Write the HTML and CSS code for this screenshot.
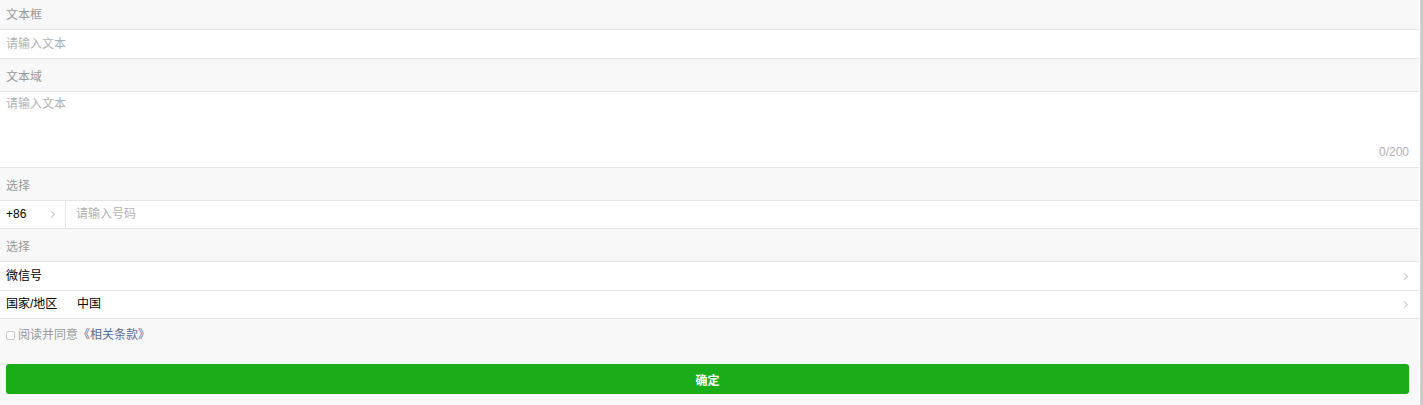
FILE: index.html
```html
<!DOCTYPE html>
<html lang="zh-CN">
<head>
<meta charset="utf-8">
<title>表单</title>
<link rel="stylesheet" href="styles.css">
</head>
<body>
<div class="page">
  <main class="form">
    <div class="title first">文本框</div>
    <div class="cells">
      <div class="cell"><input class="input" type="text" placeholder="请输入文本"></div>
    </div>

    <div class="title">文本域</div>
    <div class="cells">
      <div class="cell area">
        <textarea class="textarea" placeholder="请输入文本"></textarea>
        <div class="counter">0/200</div>
      </div>
    </div>

    <div class="title">选择</div>
    <div class="cells">
      <div class="cell phone">
        <div class="code">+86<span class="arrow"></span></div>
        <input class="input num" type="text" placeholder="请输入号码">
      </div>
    </div>

    <div class="title">选择</div>
    <div class="cells">
      <div class="cell link"><span class="label">微信号</span><span class="grow"></span><span class="arrow"></span></div>
      <div class="cell link sep"><span class="label wide">国家/地区</span><span class="value">中国</span><span class="grow"></span><span class="arrow"></span></div>
    </div>

    <label class="agree"><span class="box"></span>阅读并同意<a class="terms" href="#">《相关条款》</a></label>

    <div class="btn-area"><button class="btn">确定</button></div>
  </main>
  <div class="gutter"></div>
  <div class="bar"></div>
</div>
</body>
</html>
```

FILE: styles.css
```css
* { box-sizing: border-box; }
html, body { margin: 0; padding: 0; }
body {
  font-family: "Liberation Sans", "Noto Sans CJK SC", sans-serif;
  font-size: 12px;
  color: #000;
  background: #f8f8f8;
}
.page { display: flex; height: 405px; overflow: hidden; }
.form { width: 1419px; background: #f8f8f8; }
.gutter { width: 1px; background: #fff; }
.bar { width: 3px; background: #cdcdcd; }

.title {
  color: #999;
  line-height: 17px;
  padding: 10px 6px 5px;
}
.title.first { padding-top: 7px; }

.cells {
  background: #fff;
  border-top: 1px solid #e5e5e5;
  border-bottom: 1px solid #e5e5e5;
}
.cell {
  display: flex;
  align-items: center;
  height: 28px;
  line-height: 17px;
  padding: 0 10px 0 6px;
}
.cell.sep { border-top: 1px solid #e5e5e5; height: 28px; }

.input {
  border: 0;
  outline: 0;
  background: transparent;
  font: inherit;
  font-size: 12px;
  line-height: 17px;
  padding: 0;
  margin: 0;
  width: 100%;
  min-width: 0;
  color: #000;
}
.input::placeholder, .textarea::placeholder { color: #b2b2b2; }

.area {
  display: block;
  height: 75px;
  padding: 4px 10px 6px 6px;
}
.textarea {
  display: block;
  width: 100%;
  height: 48px;
  border: 0;
  outline: 0;
  resize: none;
  padding: 0;
  margin: 0;
  font: inherit;
  line-height: 17px;
}
.counter {
  text-align: right;
  color: #b2b2b2;
  line-height: 17px;
}

.phone { padding: 0; height: 27px; }
.code {
  flex-shrink: 0;
  display: flex;
  align-items: center;
  justify-content: space-between;
  width: 66px;
  height: 100%;
  padding: 0 9px 0 6px;
  border-right: 1px solid #e5e5e5;
}
.num { padding-left: 10px; flex: 1; }

.arrow {
  display: inline-block;
  flex-shrink: 0;
  width: 5px;
  height: 5px;
  border-top: 1px solid #c8c8cd;
  border-right: 1px solid #c8c8cd;
  transform: rotate(45deg);
  margin-right: 2px;
}
.label.wide { width: 71px; flex-shrink: 0; }
.grow { flex: 1; }

.agree {
  display: flex;
  align-items: flex-start;
  color: #999;
  line-height: 17px;
  padding: 8px 6px 0;
  height: 45px;
}
.box {
  width: 9px;
  height: 9px;
  border: 1px solid #c8c8c8;
  border-radius: 2px;
  background: #fff;
  margin: 4px 3px 0 0;
}
.terms { color: #586c94; text-decoration: none; }

.btn-area { padding: 0 10px 0 6px; }
.btn {
  display: block;
  width: 100%;
  height: 30px;
  border: 0;
  border-radius: 3px;
  background: #1aad19;
  color: #fff;
  font: inherit;
  font-size: 12px;
  font-weight: bold;
}
```
